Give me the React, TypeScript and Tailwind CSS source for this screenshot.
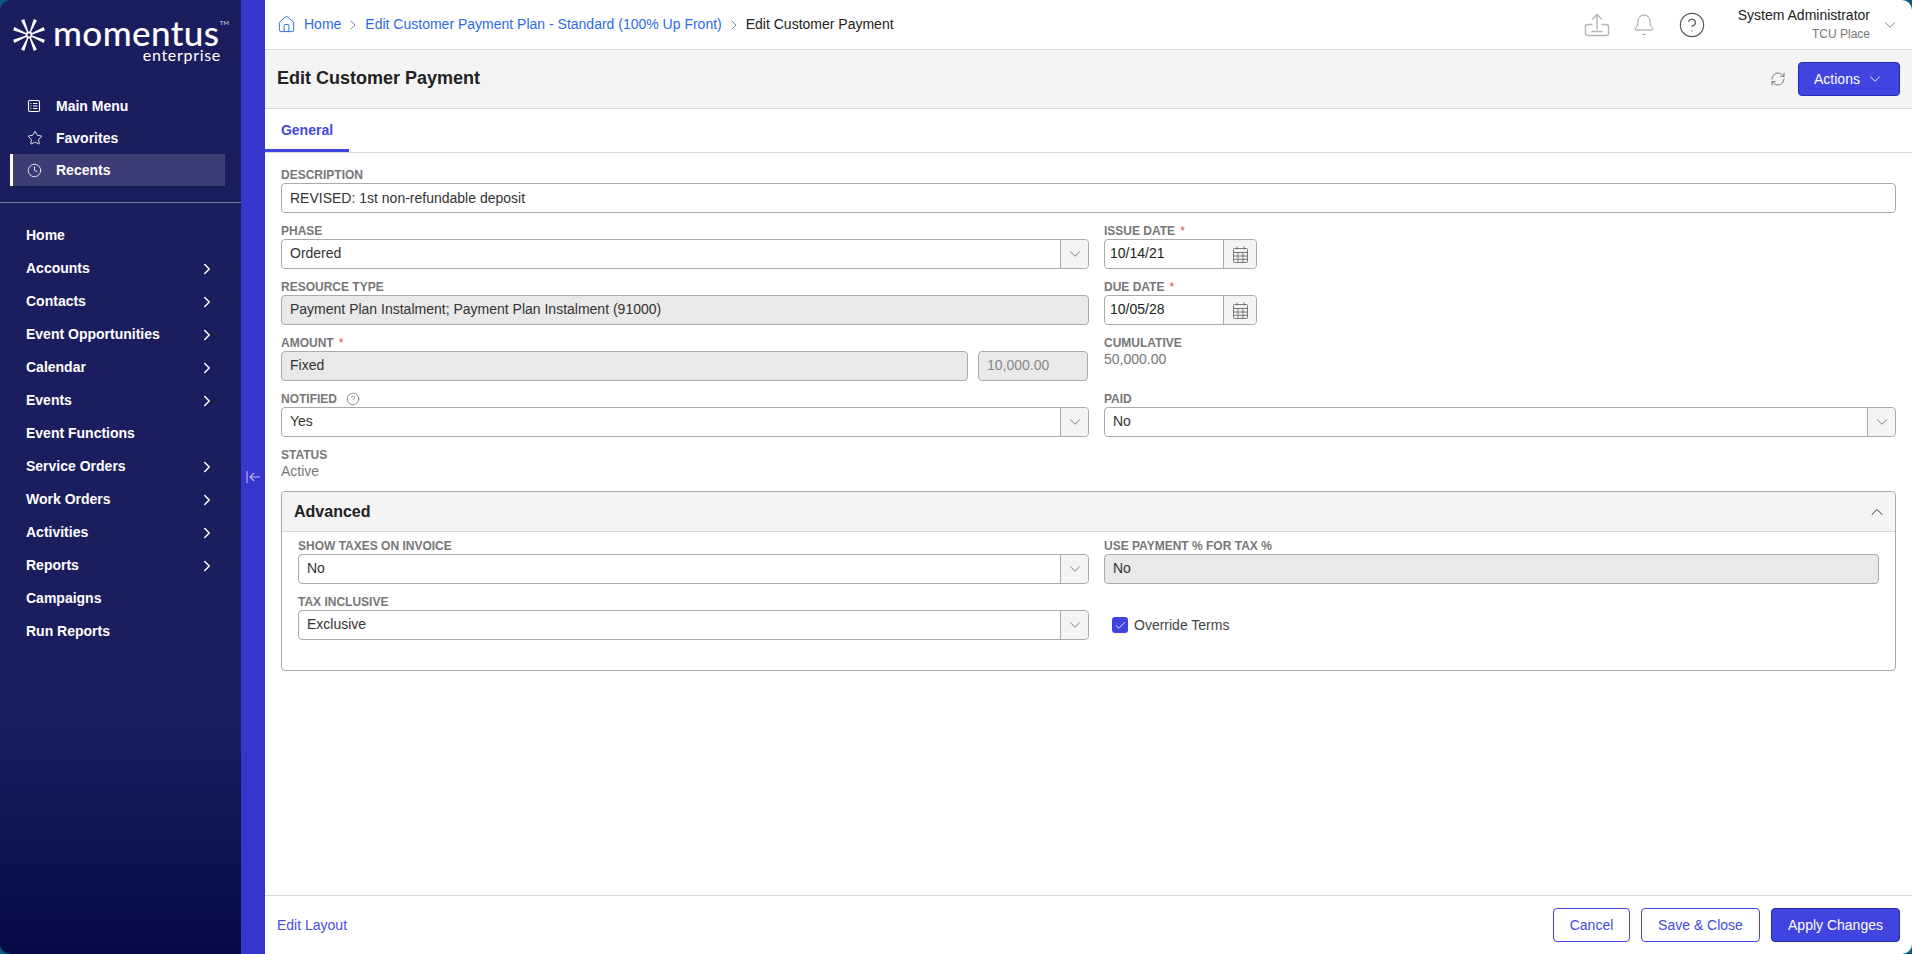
import { ChevronDown, ChevronRight, ChevronUp, Check, Star, Clock, CircleHelp, Bell, RefreshCw, Home } from 'lucide-react'
import type { ReactNode } from 'react'

const primaryNav = [
  { label: 'Home' },
  { label: 'Accounts', more: true },
  { label: 'Contacts', more: true },
  { label: 'Event Opportunities', more: true },
  { label: 'Calendar', more: true },
  { label: 'Events', more: true },
  { label: 'Event Functions' },
  { label: 'Service Orders', more: true },
  { label: 'Work Orders', more: true },
  { label: 'Activities', more: true },
  { label: 'Reports', more: true },
  { label: 'Campaigns' },
  { label: 'Run Reports' },
]

function LogoMark() {
  return (
    <svg width="36" height="36" viewBox="-18 -18 36 36" className="shrink-0">
      {[22.5, 67.5, 112.5, 157.5, 202.5, 247.5, 292.5, 337.5].map((a) => (
        <path key={a} d="M-0.6 -3 L-1.7 -16.5 L1.7 -16.5 L0.6 -3 Z" fill="#fff" transform={`rotate(${a})`} />
      ))}
      <circle r="3.4" fill="#fff" />
      <rect x="-1.4" y="-1.4" width="2.8" height="2.8" fill="#1b1e5e" />
    </svg>
  )
}

function MenuIcon() {
  return (
    <svg width="14" height="14" viewBox="0 0 14 14" fill="none" stroke="#fff" strokeWidth="1.1">
      <rect x="1.5" y="1.5" width="11" height="11" rx="1.5" />
      <path d="M3.5 4.5h1M3.5 7h1M3.5 9.5h1M6 4.5h4.5M6 7h4.5M6 9.5h4.5" />
    </svg>
  )
}

function UploadIcon() {
  return (
    <svg width="26" height="26" viewBox="0 0 26 26" fill="none" stroke="#b5b5b5" strokeWidth="1.4" strokeLinecap="round" strokeLinejoin="round">
      <path d="M13 2.5V17M8.5 7 13 2.5 17.5 7" />
      <path d="M8 13H3.5A2 2 0 0 0 1.5 15v7a2 2 0 0 0 2 2h19a2 2 0 0 0 2-2v-7a2 2 0 0 0-2-2H18M8 20h10" transform="translate(0 -.5)" />
    </svg>
  )
}

function CalendarIcon() {
  return (
    <svg width="15" height="17" viewBox="0 0 15 17" fill="none" stroke="#777" strokeWidth="1">
      <path d="M4 .5v3M11 .5v3" />
      <rect x=".5" y="2.5" width="14" height="14" rx="1" />
      <path d="M.5 6.5h14M.5 10h14M.5 13.3h14M5 6.5v10M10 6.5v10" />
    </svg>
  )
}

function Label({ children, required }: { children: ReactNode; required?: boolean }) {
  return (
    <div className="flex h-[16px] items-start pt-px text-[12px] font-bold leading-[14px] text-[#777]">
      {children}
      {required && <span className="ml-[5px] font-normal text-[#e2504c]">*</span>}
    </div>
  )
}

function Select({ value }: { value: string }) {
  return (
    <div className="flex h-[30px] rounded-[4px] border border-[#aaa] bg-white">
      <div className="flex flex-1 items-center pb-[2px] pl-[8px] text-[14px] text-[#333]">{value}</div>
      <div className="flex w-[28px] items-center justify-center rounded-r-[4px] border-l border-[#aaa] bg-[#f4f4f4]">
        <ChevronDown size={18} strokeWidth={1} color="#555" />
      </div>
    </div>
  )
}

function ReadOnly({ value, className }: { value: string; className?: string }) {
  return (
    <div className={`flex h-[30px] items-center rounded-[4px] border border-[#aaa] bg-[#e9e9e9] pb-[2px] pl-[8px] text-[14px] ${className ?? 'text-[#333]'}`}>
      {value}
    </div>
  )
}

function DateField({ value }: { value: string }) {
  return (
    <div className="flex h-[30px] w-[153px] rounded-[4px] border border-[#aaa] bg-white">
      <div className="flex flex-1 items-center pb-[2px] pl-[5px] text-[14px] text-[#222]">{value}</div>
      <div className="flex w-[33px] items-center justify-center rounded-r-[4px] border-l border-[#aaa] bg-[#f4f4f4]">
        <CalendarIcon />
      </div>
    </div>
  )
}

function Field({ label, required, children }: { label: ReactNode; required?: boolean; children: ReactNode }) {
  return (
    <div className="pt-[10px]">
      <Label required={required}>{label}</Label>
      {children}
    </div>
  )
}

export default function App() {
  return (
    <div className="h-screen w-full overflow-hidden bg-[#0d5a80] font-['Liberation_Sans',Arial,sans-serif]">
      <div className="flex h-full overflow-hidden rounded-[10px]">
        {/* Sidebar */}
        <aside className="flex w-[241px] shrink-0 flex-col bg-gradient-to-b from-[#1b1e5e] via-[#1b1e5e] via-75% to-[#090a45] text-white">
          <div className="flex h-[90px] items-start pl-[11px] pt-[17px]">
            <LogoMark />
            <div className="ml-[6px] flex w-[168px] flex-col items-end">
              <div className="relative w-full font-['Lato',sans-serif] text-[35px] font-medium leading-[30px] tracking-[0.4px]">
                momentus
                <span className="absolute -right-[8px] top-[2px] text-[6px] leading-[8px] tracking-normal text-[#cfcfe0]">TM</span>
              </div>
              <div className="font-['Lato',sans-serif] text-[16px] leading-[16px] tracking-[0.7px]">enterprise</div>
            </div>
          </div>

          <nav className="pl-[10px] pr-[16px] text-[14px] font-bold">
            <div className="flex h-[32px] items-center pl-[17px]">
              <span className="flex w-[29px]"><MenuIcon /></span>Main Menu
            </div>
            <div className="flex h-[32px] items-center pl-[17px]">
              <span className="flex w-[29px]"><Star size={16} strokeWidth={1.3} /></span>Favorites
            </div>
            <div className="flex h-[32px] items-center border-l-[3px] border-white bg-[#3d3c74] pl-[14px]">
              <span className="flex w-[29px]"><Clock size={15} strokeWidth={1.3} /></span>Recents
            </div>
          </nav>

          <div className="mt-[16px] border-t border-[#77779a]" />

          <nav className="pt-[16px] text-[14px] font-bold">
            {primaryNav.map((item) => (
              <div key={item.label} className="flex h-[33px] items-center justify-between pl-[26px] pr-[25px]">
                {item.label}
                {item.more && <ChevronRight size={18} strokeWidth={2} />}
              </div>
            ))}
          </nav>
        </aside>

        {/* Collapse strip */}
        <div className="flex w-[24px] shrink-0 items-center justify-center bg-[#3636cf]">
          <svg width="15" height="12" viewBox="0 0 15 12" fill="none" stroke="#b9b9f2" strokeWidth="1.1">
            <path d="M1 0v12M14 6H4M8 2 4 6l4 4" />
          </svg>
        </div>

        {/* Main */}
        <main className="flex min-w-0 flex-1 flex-col bg-white">
          <header className="flex h-[50px] shrink-0 items-center border-b border-[#d8d8d8] pl-[12px] pr-[13px] text-[14px]">
            <Home size={19} strokeWidth={1.2} color="#2b6be8" />
            <span className="ml-[8px] text-[#2b6be8]">Home</span>
            <ChevronRight size={16} strokeWidth={1.1} color="#555" className="mx-[4px]" />
            <span className="text-[#2b6be8]">Edit Customer Payment Plan - Standard (100% Up Front)</span>
            <ChevronRight size={16} strokeWidth={1.1} color="#555" className="mx-[4px]" />
            <span className="text-[#222]">Edit Customer Payment</span>
            <div className="ml-auto flex items-center">
              <UploadIcon />
              <Bell size={24} strokeWidth={1} color="#999" className="ml-[22px]" />
              <CircleHelp size={28} strokeWidth={1} color="#555" className="ml-[22px]" />
              <div className="ml-[32px] pb-[2px] text-right">
                <div className="text-[14px] leading-[20px] text-[#222]">System Administrator</div>
                <div className="text-[12px] leading-[18px] text-[#777]">TCU Place</div>
              </div>
              <ChevronDown size={18} strokeWidth={1} color="#555" className="ml-[11px]" />
            </div>
          </header>

          <div className="flex h-[59px] shrink-0 items-center border-b border-[#d8d8d8] bg-[#f4f4f4] pl-[12px] pr-[12px]">
            <h1 className="pb-[2px] text-[18px] font-bold text-[#222]">Edit Customer Payment</h1>
            <RefreshCw size={16} strokeWidth={1.1} color="#555" className="ml-auto" />
            <button className="ml-[12px] flex h-[34px] w-[102px] items-center justify-center gap-[6px] rounded-[4px] border border-[#1c2cb0] bg-[#4144e0] text-[14px] text-white">
              Actions <ChevronDown size={18} strokeWidth={1.2} />
            </button>
          </div>

          <div className="flex h-[44px] shrink-0 border-b border-[#d8d8d8]">
            <div className="flex w-[84px] items-center justify-center border-b-[3px] border-[#4144e0] pt-[3px] text-[14px] font-bold text-[#4448e0]">
              General
            </div>
          </div>

          <div className="min-h-0 flex-1 px-[16px] pt-[4px]">
            <Field label="DESCRIPTION">
              <div className="flex h-[30px] items-center rounded-[4px] border border-[#aaa] bg-white pl-[8px] text-[14px] text-[#333]">
                REVISED: 1st non-refundable deposit
              </div>
            </Field>

            <div className="grid grid-cols-[808px_1fr] gap-x-[15px]">
              <Field label="PHASE"><Select value="Ordered" /></Field>
              <Field label="ISSUE DATE" required><DateField value="10/14/21" /></Field>

              <Field label="RESOURCE TYPE"><ReadOnly value="Payment Plan Instalment; Payment Plan Instalment (91000)" /></Field>
              <Field label="DUE DATE" required><DateField value="10/05/28" /></Field>

              <Field label="AMOUNT" required>
                <div className="flex gap-[10px] pr-px">
                  <ReadOnly value="Fixed" className="flex-1 text-[#333]" />
                  <ReadOnly value="10,000.00" className="w-[110px] text-[#888]" />
                </div>
              </Field>
              <Field label="CUMULATIVE">
                <div className="text-[14px] leading-[16px] text-[#777]">50,000.00</div>
              </Field>

              <Field
                label={
                  <span className="flex items-center">
                    NOTIFIED
                    <CircleHelp size={14} strokeWidth={1.2} color="#666" className="ml-[9px]" />
                  </span>
                }
              >
                <Select value="Yes" />
              </Field>
              <Field label="PAID"><Select value="No" /></Field>
            </div>

            <div className="pt-[10px]">
              <Label>STATUS</Label>
              <div className="text-[14px] leading-[16px] text-[#777]">Active</div>
            </div>

            <section className="mt-[12px] h-[180px] rounded-[4px] border border-[#aaa]">
              <div className="flex h-[40px] items-center justify-between rounded-t-[4px] border-b border-[#d8d8d8] bg-[#f4f4f4] pl-[12px] pr-[8px]">
                <h2 className="text-[16px] font-bold text-[#222]">Advanced</h2>
                <ChevronUp size={20} strokeWidth={1.2} color="#333" />
              </div>
              <div className="grid grid-cols-[791px_1fr] gap-x-[15px] pl-[16px] pr-[16px]">
                <div className="pt-[6px]">
                  <Label>SHOW TAXES ON INVOICE</Label>
                  <Select value="No" />
                </div>
                <div className="pt-[6px]">
                  <Label>USE PAYMENT % FOR TAX %</Label>
                  <ReadOnly value="No" />
                </div>
                <Field label="TAX INCLUSIVE"><Select value="Exclusive" /></Field>
                <div className="flex items-end pb-[7px] pl-[8px]">
                  <span className="flex h-[16px] w-[16px] items-center justify-center rounded-[3px] bg-[#4144e0]">
                    <Check size={13} strokeWidth={1.5} color="#fff" />
                  </span>
                  <span className="ml-[6px] text-[14px] leading-[16px] text-[#444]">Override Terms</span>
                </div>
              </div>
            </section>
          </div>

          <footer className="flex h-[59px] shrink-0 items-center border-t border-[#d8d8d8] pl-[12px] pr-[12px] text-[14px]">
            <span className="text-[#4a4de0]">Edit Layout</span>
            <button className="ml-auto h-[34px] w-[77px] rounded-[4px] border border-[#4144e0] bg-white text-[#4448e0]">Cancel</button>
            <button className="ml-[11px] h-[34px] w-[119px] rounded-[4px] border border-[#4144e0] bg-white text-[#4448e0]">Save &amp; Close</button>
            <button className="ml-[11px] h-[34px] w-[129px] rounded-[4px] border border-[#1c2cb0] bg-[#4144e0] text-white">Apply Changes</button>
          </footer>
        </main>
      </div>
    </div>
  )
}
